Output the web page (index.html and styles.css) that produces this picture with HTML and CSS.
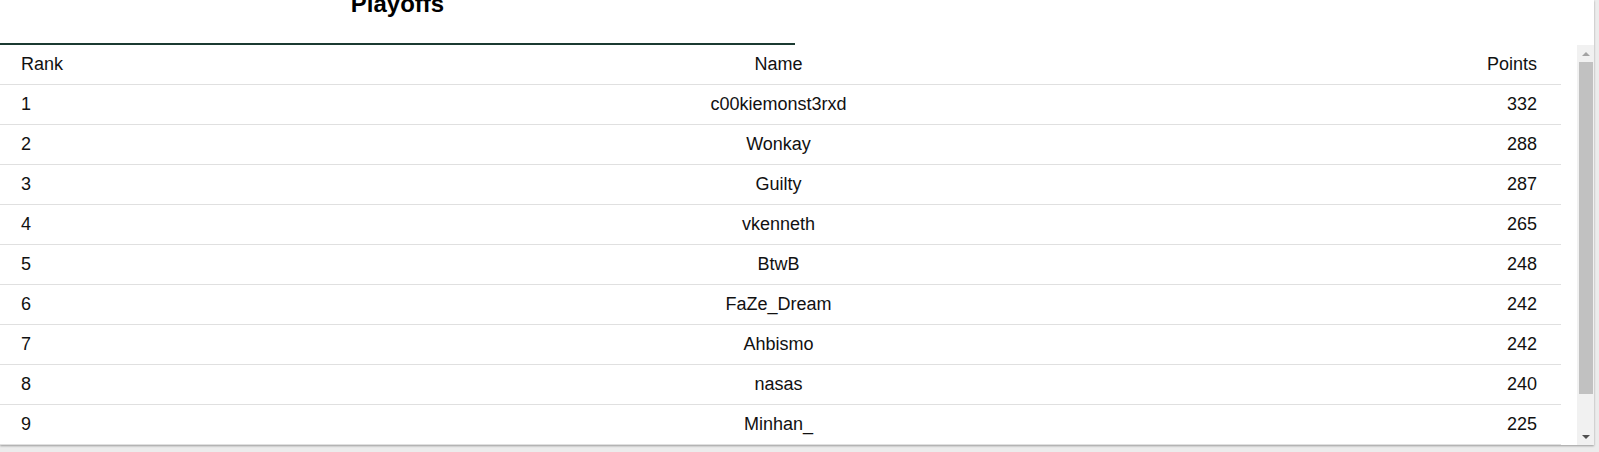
FILE: index.html
```html
<!DOCTYPE html>
<html lang="en">
<head>
<meta charset="utf-8">
<title>Playoffs</title>
<link rel="stylesheet" href="styles.css">
</head>
<body>
<div class="card">
  <div class="tabs">
    <div class="tab tab-active">Playoffs</div>
    <div class="tab"></div>
  </div>
  <div class="panel">
    <div class="scroll">
      <table class="standings">
        <thead>
          <tr><th class="c-rank">Rank</th><th class="c-name">Name</th><th class="c-points">Points</th></tr>
        </thead>
        <tbody>
          <tr><td class="c-rank">1</td><td class="c-name">c00kiemonst3rxd</td><td class="c-points">332</td></tr>
          <tr><td class="c-rank">2</td><td class="c-name">Wonkay</td><td class="c-points">288</td></tr>
          <tr><td class="c-rank">3</td><td class="c-name">Guilty</td><td class="c-points">287</td></tr>
          <tr><td class="c-rank">4</td><td class="c-name">vkenneth</td><td class="c-points">265</td></tr>
          <tr><td class="c-rank">5</td><td class="c-name">BtwB</td><td class="c-points">248</td></tr>
          <tr><td class="c-rank">6</td><td class="c-name">FaZe_Dream</td><td class="c-points">242</td></tr>
          <tr><td class="c-rank">7</td><td class="c-name">Ahbismo</td><td class="c-points">242</td></tr>
          <tr><td class="c-rank">8</td><td class="c-name">nasas</td><td class="c-points">240</td></tr>
          <tr><td class="c-rank">9</td><td class="c-name">Minhan_</td><td class="c-points">225</td></tr>
        </tbody>
      </table>
    </div>
    <div class="scrollbar" aria-hidden="true">
      <div class="sb-btn">
        <svg width="8" height="4" viewBox="0 0 8 4"><path d="M0 4 L4 0 L8 4 Z" fill="#a3a3a3"/></svg>
      </div>
      <div class="sb-track">
        <div class="sb-thumb"></div>
      </div>
      <div class="sb-btn">
        <svg width="8" height="4" viewBox="0 0 8 4"><path d="M0 0 L8 0 L4 4 Z" fill="#505050"/></svg>
      </div>
    </div>
  </div>
</div>
</body>
</html>
```
FILE: styles.css
```css
html, body {
  margin: 0;
  padding: 0;
}
body {
  background: #ececec;
  font-family: "Liberation Sans", Arial, sans-serif;
  color: #111;
  overflow: hidden;
  height: 452px;
}
.card {
  width: 1594px;
  height: 445px;
  background: #ffffff;
  box-shadow: 0 1px 2px rgba(0, 0, 0, 0.35);
  display: flex;
  flex-direction: column;
}
.tabs {
  display: flex;
  flex: 0 0 auto;
}
.tab {
  flex: 0 0 795px;
  margin-top: -10px;
  padding-bottom: 25px;
  font-size: 24px;
  line-height: 28px;
  font-weight: bold;
  text-align: center;
  color: #000;
  border-bottom: 2px solid transparent;
}
.tab + .tab {
  flex: 1 1 auto;
}
.tab-active {
  border-bottom-color: #1b3a31;
}
.panel {
  flex: 1 1 auto;
  min-height: 0;
  display: flex;
}
.scroll {
  flex: 1 1 auto;
  min-width: 0;
  overflow: hidden;
  padding-right: 16px;
}
.scrollbar {
  flex: 0 0 17px;
  display: flex;
  flex-direction: column;
  background: #f1f1f1;
}
.sb-btn {
  flex: 0 0 17px;
  display: flex;
  align-items: center;
  justify-content: center;
}
.sb-btn svg {
  display: block;
}
.sb-track {
  flex: 1 1 auto;
  padding: 0 1px 0 2px;
}
.sb-thumb {
  height: 332px;
  background: #c1c1c1;
}
.standings {
  width: 100%;
  border-collapse: collapse;
  table-layout: fixed;
  font-size: 18px;
}
.standings th,
.standings td {
  font-weight: normal;
  padding: 0 24px 0 21px;
  border-bottom: 1px solid #e0e0e0;
  height: 39px;
}
.c-rank { text-align: left; }
.c-name { text-align: center; }
.standings .c-name { padding: 0 24px 0 20px; }
.c-points { text-align: right; }
```
